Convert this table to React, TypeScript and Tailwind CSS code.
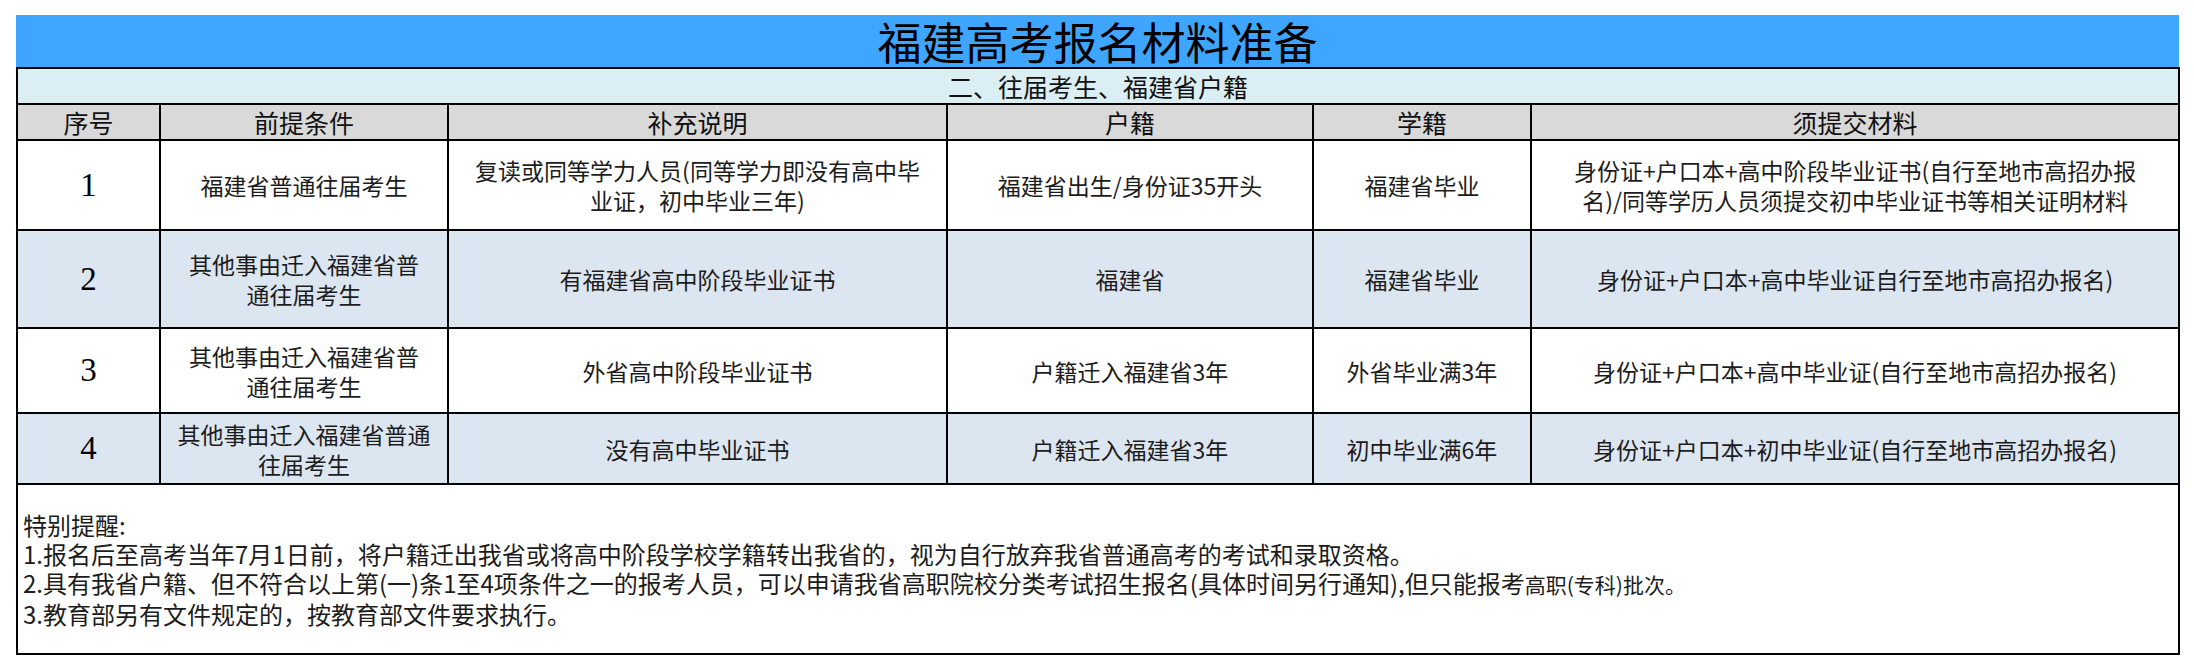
const cjk = "font-['Noto_Sans_CJK_SC',sans-serif]"

type Row = {
  no: string
  cond: string[]
  note: string[]
  huji: string
  xueji: string
  docs: string[]
  shaded: boolean
  h: string
}

const rows: Row[] = [
  {
    no: '1',
    cond: ['福建省普通往届考生'],
    note: ['复读或同等学力人员(同等学力即没有高中毕', '业证，初中毕业三年)'],
    huji: '福建省出生/身份证35开头',
    xueji: '福建省毕业',
    docs: ['身份证+户口本+高中阶段毕业证书(自行至地市高招办报', '名)/同等学历人员须提交初中毕业证书等相关证明材料'],
    shaded: false,
    h: 'h-[90px]',
  },
  {
    no: '2',
    cond: ['其他事由迁入福建省普', '通往届考生'],
    note: ['有福建省高中阶段毕业证书'],
    huji: '福建省',
    xueji: '福建省毕业',
    docs: ['身份证+户口本+高中毕业证自行至地市高招办报名)'],
    shaded: true,
    h: 'h-[98px]',
  },
  {
    no: '3',
    cond: ['其他事由迁入福建省普', '通往届考生'],
    note: ['外省高中阶段毕业证书'],
    huji: '户籍迁入福建省3年',
    xueji: '外省毕业满3年',
    docs: ['身份证+户口本+高中毕业证(自行至地市高招办报名)'],
    shaded: false,
    h: 'h-[85px]',
  },
  {
    no: '4',
    cond: ['其他事由迁入福建省普通', '往届考生'],
    note: ['没有高中毕业证书'],
    huji: '户籍迁入福建省3年',
    xueji: '初中毕业满6年',
    docs: ['身份证+户口本+初中毕业证(自行至地市高招办报名)'],
    shaded: true,
    h: 'h-[71px]',
  },
]

function Lines({ lines }: { lines: string[] }) {
  return (
    <>
      {lines.map((l, i) => (
        <div key={i} className="whitespace-nowrap">
          {l}
        </div>
      ))}
    </>
  )
}

const cell = 'border-2 border-black text-center align-middle px-1'

export default function App() {
  return (
    <div className={`bg-white min-h-[670px] pt-[15px] pl-[16px] ${cjk}`}>
      <div className="w-[2163px]">
        <div className="h-[52px] bg-[#3ea6fe] flex items-center justify-center text-[44px] leading-none text-black">
          福建高考报名材料准备
        </div>
        <table className="w-full table-fixed border-collapse text-[23px] leading-[30px] text-[#1c1c1c]">
          <colgroup>
            <col className="w-[143px]" />
            <col className="w-[288px]" />
            <col className="w-[499px]" />
            <col className="w-[366px]" />
            <col className="w-[218px]" />
            <col className="w-[648px]" />
          </colgroup>
          <tbody>
            <tr className="h-[36px] bg-[#daeef3]">
              <td colSpan={6} className={`${cell} text-[25px] leading-[30px] text-[#111]`}>
                二、往届考生、福建省户籍
              </td>
            </tr>
            <tr className="h-[36px] bg-[#d9d9d9] text-[25px] leading-[30px] text-[#111]">
              <td className={cell}>序号</td>
              <td className={cell}>前提条件</td>
              <td className={cell}>补充说明</td>
              <td className={cell}>户籍</td>
              <td className={cell}>学籍</td>
              <td className={cell}>须提交材料</td>
            </tr>
            {rows.map((r) => (
              <tr key={r.no} className={`${r.h} ${r.shaded ? 'bg-[#dce6f1]' : 'bg-white'}`}>
                <td className={`${cell} font-['Liberation_Serif',serif] text-[33px] leading-none text-black`}>
                  {r.no}
                </td>
                <td className={cell}>
                  <Lines lines={r.cond} />
                </td>
                <td className={cell}>
                  <Lines lines={r.note} />
                </td>
                <td className={cell}>{r.huji}</td>
                <td className={cell}>{r.xueji}</td>
                <td className={cell}>
                  <Lines lines={r.docs} />
                </td>
              </tr>
            ))}
            <tr className="h-[170px] bg-white">
              <td colSpan={6} className="border-2 border-black align-middle text-left pl-[5px] text-[24px] leading-[29px]">
                <div>特别提醒:</div>
                <div>1.报名后至高考当年7月1日前，将户籍迁出我省或将高中阶段学校学籍转出我省的，视为自行放弃我省普通高考的考试和录取资格。</div>
                <div>
                  2.具有我省户籍、但不符合以上第(一)条1至4项条件之一的报考人员，可以申请我省高职院校分类考试招生报名(具体时间另行通知),但只能报考
                  <span className="text-[21px]">高职(专科)批次。</span>
                </div>
                <div>3.教育部另有文件规定的，按教育部文件要求执行。</div>
              </td>
            </tr>
          </tbody>
        </table>
      </div>
    </div>
  )
}
